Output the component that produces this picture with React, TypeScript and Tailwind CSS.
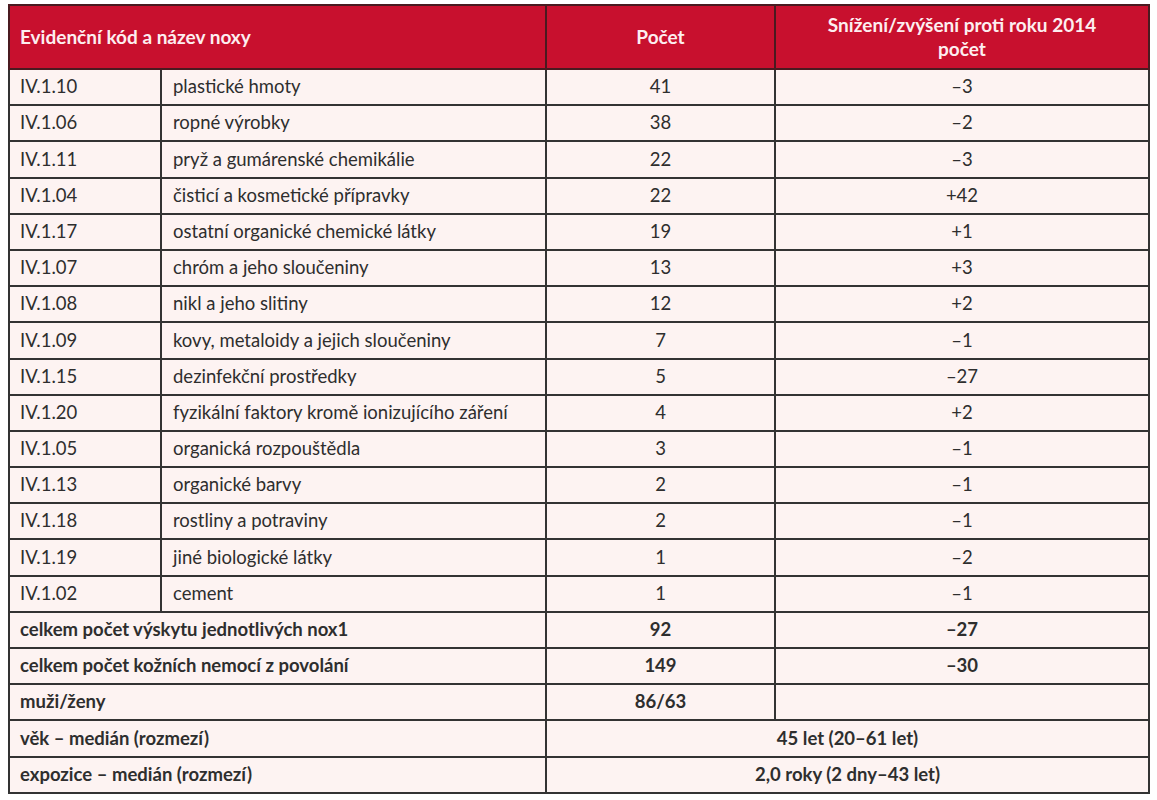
import React from "react";

const rows: [string, string, string, string][] = [
  ["IV.1.10", "plastické hmoty", "41", "–3"],
  ["IV.1.06", "ropné výrobky", "38", "–2"],
  ["IV.1.11", "pryž a gumárenské chemikálie", "22", "–3"],
  ["IV.1.04", "čisticí a kosmetické přípravky", "22", "+42"],
  ["IV.1.17", "ostatní organické chemické látky", "19", "+1"],
  ["IV.1.07", "chróm a jeho sloučeniny", "13", "+3"],
  ["IV.1.08", "nikl a jeho slitiny", "12", "+2"],
  ["IV.1.09", "kovy, metaloidy a jejich sloučeniny", "7", "–1"],
  ["IV.1.15", "dezinfekční prostředky", "5", "–27"],
  ["IV.1.20", "fyzikální faktory kromě ionizujícího záření", "4", "+2"],
  ["IV.1.05", "organická rozpouštědla", "3", "–1"],
  ["IV.1.13", "organické barvy", "2", "–1"],
  ["IV.1.18", "rostliny a potraviny", "2", "–1"],
  ["IV.1.19", "jiné biologické látky", "1", "–2"],
  ["IV.1.02", "cement", "1", "–1"],
];

const cell = "border-2 border-[#333] h-[36.2px] py-0";

export default function App() {
  return (
    <div className="bg-white w-[1157px] h-[800px] pt-[4px] pl-[8px] font-['Lato',sans-serif] text-[#2e2e2e]">
      <table className="border-collapse bg-[#fdf3f2] w-[1140px] table-fixed">
        <colgroup>
          <col className="w-[152px]" />
          <col className="w-[385px]" />
          <col className="w-[229px]" />
          <col className="w-[374px]" />
        </colgroup>
        <thead>
          <tr className="bg-[#c8102e] text-[#fdeef0] font-bold text-[19px] leading-[24px]">
            <th colSpan={2} className="border-2 border-[#4a1a20] h-[64px] text-left px-[10px]">
              Evidenční kód a název noxy
            </th>
            <th className="border-2 border-[#4a1a20] text-center">Počet</th>
            <th className="border-2 border-[#4a1a20] text-center">
              Snížení/zvýšení proti roku 2014
              <br />
              počet
            </th>
          </tr>
        </thead>
        <tbody className="text-[18.5px]">
          {rows.map(([code, name, n, diff]) => (
            <tr key={code}>
              <td className={`${cell} px-[10px]`}>{code}</td>
              <td className={`${cell} px-[11px]`}>{name}</td>
              <td className={`${cell} text-center`}>{n}</td>
              <td className={`${cell} text-center`}>{diff}</td>
            </tr>
          ))}
          <tr className="font-bold">
            <td colSpan={2} className={`${cell} px-[10px]`}>
              celkem počet výskytu jednotlivých nox1
            </td>
            <td className={`${cell} text-center`}>92</td>
            <td className={`${cell} text-center`}>–27</td>
          </tr>
          <tr className="font-bold">
            <td colSpan={2} className={`${cell} px-[10px]`}>
              celkem počet kožních nemocí z povolání
            </td>
            <td className={`${cell} text-center`}>149</td>
            <td className={`${cell} text-center`}>–30</td>
          </tr>
          <tr className="font-bold">
            <td colSpan={2} className={`${cell} px-[10px]`}>
              muži/ženy
            </td>
            <td className={`${cell} text-center`}>86/63</td>
            <td className={cell}></td>
          </tr>
          <tr className="font-bold">
            <td colSpan={2} className={`${cell} px-[10px]`}>
              věk – medián (rozmezí)
            </td>
            <td colSpan={2} className={`${cell} text-center`}>
              45 let (20–61 let)
            </td>
          </tr>
          <tr className="font-bold">
            <td colSpan={2} className={`${cell} px-[10px]`}>
              expozice – medián (rozmezí)
            </td>
            <td colSpan={2} className={`${cell} text-center`}>
              2,0 roky (2 dny–43 let)
            </td>
          </tr>
        </tbody>
      </table>
    </div>
  );
}
